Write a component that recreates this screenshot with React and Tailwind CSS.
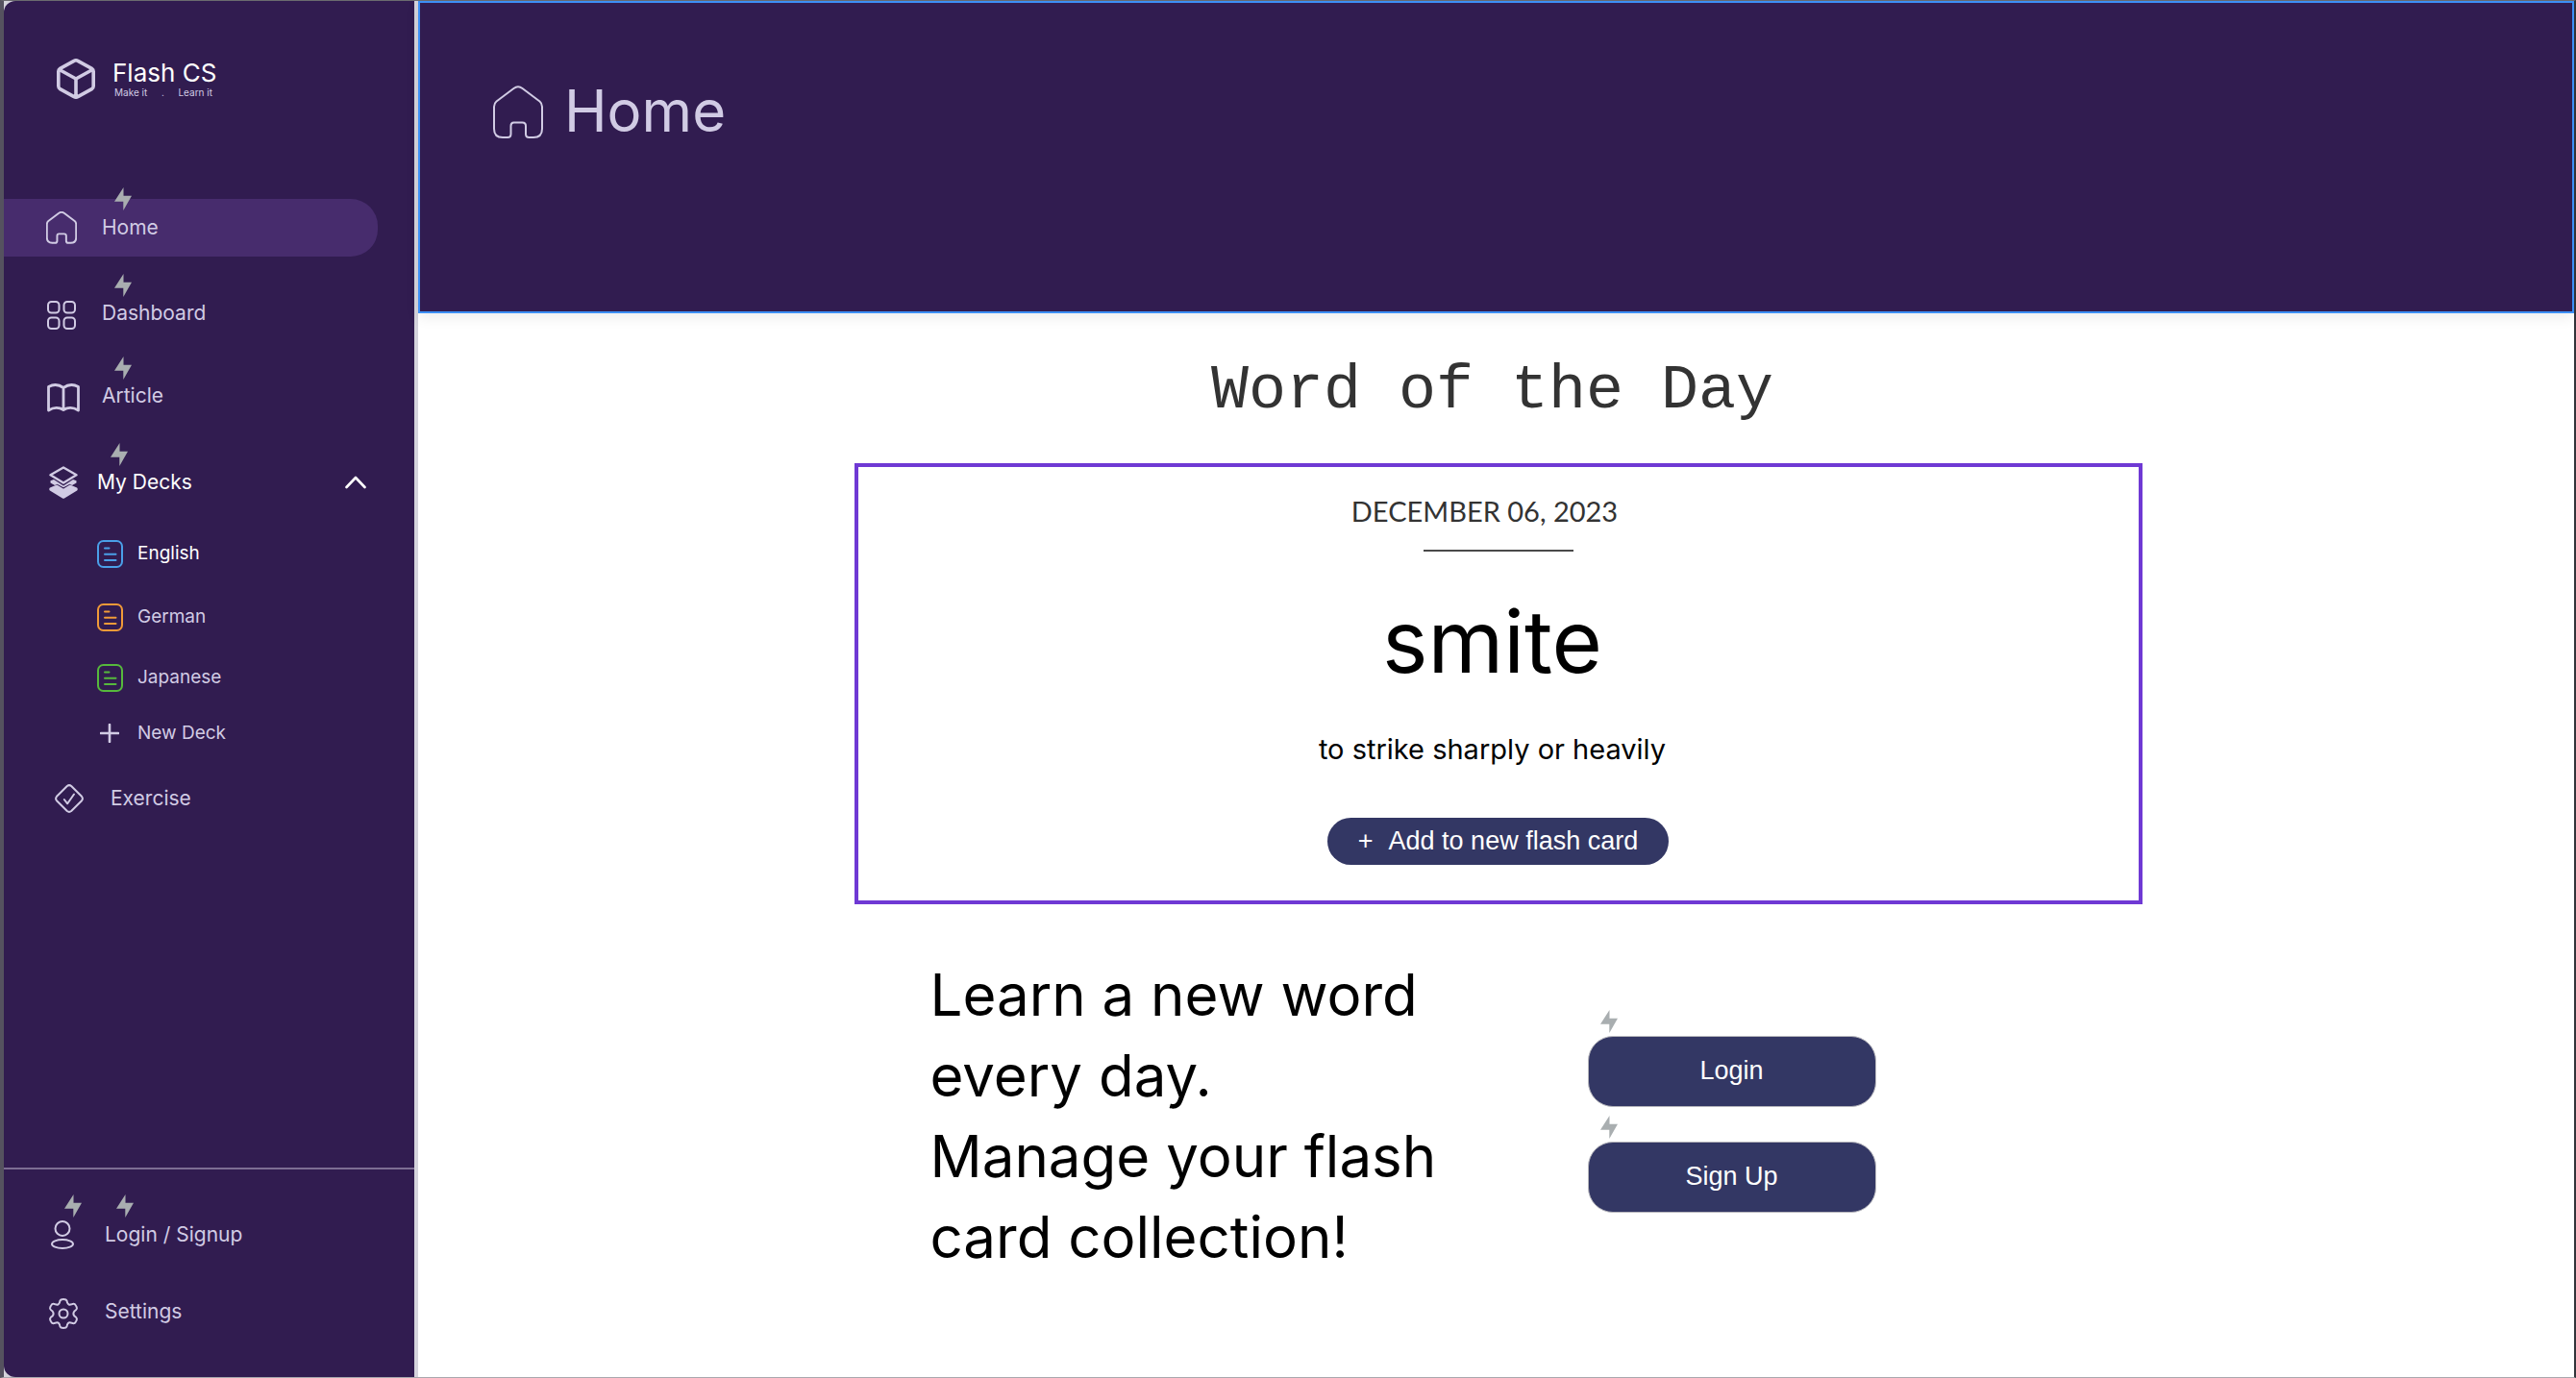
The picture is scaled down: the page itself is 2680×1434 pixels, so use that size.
const Bolt = ({ className = "" }) => (
  <svg viewBox="0 0 18 24" aria-hidden="true" className={`pointer-events-none absolute h-6 w-[18px] fill-[#a9aeb0] ${className}`}>
    <path d="M9.500 0 V8.800 H18 L9.300 24 V14.800 H0 Z" />
  </svg>
);

const HomeIcon = ({ className, stroke }) => (
  <svg viewBox="0 0 52 56" fill="none" stroke="currentColor" strokeWidth={stroke} strokeLinejoin="round" aria-hidden="true" className={className}>
    <path d="M21.500 3 Q26 -0.500 30.500 3 L48.500 16.500 Q51 18.500 51 22 V45 Q51 54 42 54 H37.500 Q34 54 34 50.500 V42 Q34 38.500 30.500 38.500 H21.500 Q18.500 38.500 18.500 42 V50.500 Q18.500 54 15 54 H10 Q1 54 1 45 V22 Q1 18.500 3.500 16.500 Z" />
  </svg>
);

const Stroke = ({ children, className, viewBox, width = 2 }) => (
  <svg viewBox={viewBox} fill="none" stroke="currentColor" strokeWidth={width} strokeLinecap="round" strokeLinejoin="round" aria-hidden="true" className={className}>
    {children}
  </svg>
);

const CubeIcon = () => (
  <Stroke viewBox="0 0 40 42" width={3.6} className="h-[42px] w-10">
    <path d="M18 2.300 Q20 1.300 22 2.300 L36.500 10.300 Q38.200 11.300 38.200 13.300 V28.500 Q38.200 30.700 36.500 31.700 L22 39.700 Q20 40.700 18 39.700 L3.500 31.700 Q1.800 30.700 1.800 28.500 V13.300 Q1.800 11.300 3.500 10.300 Z M2.800 11.500 L20 21 L37.200 11.500 M20 21 V40" />
  </Stroke>
);

const GridIcon = () => (
  <Stroke viewBox="0 0 30 30" className="size-[30px]">
    <rect x="1" y="1" width="11.500" height="11.500" rx="3.500" />
    <rect x="17.500" y="1" width="11.500" height="11.500" rx="3.500" />
    <rect x="1" y="17.500" width="11.500" height="11.500" rx="3.500" />
    <rect x="17.500" y="17.500" width="11.500" height="11.500" rx="3.500" />
  </Stroke>
);

const BookIcon = () => (
  <Stroke viewBox="0 0 34 30" width={2.800} className="h-[30px] w-[34px]">
    <path d="M17 4.500 Q9.500 -1 1.500 3.500 V28 Q9.500 23 17 27.500 Q24.500 23 32.500 28 V3.500 Q24.500 -1 17 4.500 Z M17 4.500 V27.500" />
  </Stroke>
);

const StackIcon = () => (
  <Stroke viewBox="0 0 30 34" width={2.400} className="h-[34px] w-[30px]">
    <path d="M15 1.500 L28.500 9.300 L15 17.500 L1.500 9.300 Z" />
    <path d="M1.500 15.300 L5 14 L15 20.500 L25 14 L28.500 15.300 V17.500 L24 20 L21.500 18.700 L15 22.300 L8.500 18.700 L6 20 L1.500 17.500 Z" fill="currentColor" stroke="none" />
    <path d="M1.500 23.700 L8 20.800 L15 25 L22 20.800 L28.500 23.700 V24.500 L15 32.600 L1.500 24.500 Z" fill="currentColor" />
  </Stroke>
);

const DeckIcon = ({ className }) => (
  <Stroke viewBox="0 0 27 29" className={`h-[29px] w-[27px] ${className}`}>
    <rect x="1" y="1" width="25" height="27" rx="5.500" />
    <path d="M8 8.500 H12.500 M8 14.700 H19.500 M8 21 H19.500" />
  </Stroke>
);

const DiamondIcon = () => (
  <Stroke viewBox="0 0 30 30" className="size-[30px]">
    <path d="M12.800 2 Q15 0.200 17.200 2 L28 12.800 Q29.800 15 28 17.200 L17.200 28 Q15 29.800 12.800 28 L2 17.200 Q0.200 15 2 12.800 Z" />
    <path d="M9.800 16 L13.200 20.300 L20 10.500" />
  </Stroke>
);

const UserIcon = () => (
  <Stroke viewBox="0 0 24 30" className="h-[30px] w-6">
    <circle cx="12" cy="8.500" r="7.500" />
    <ellipse cx="12" cy="24.500" rx="11" ry="4.500" />
  </Stroke>
);

const GearIcon = () => (
  <Stroke viewBox="0 0 30 32" className="h-8 w-[30px]">
    <path d="M12.500 1.500 Q15 0.700 17.500 1.500 Q18.800 2.200 19 4.500 Q20 7.500 23.500 6.300 Q26.500 5 27.500 7 Q29.300 9.300 28.800 11 Q28.300 12.300 26.500 13.300 Q24.300 16 26.500 18.700 Q28.300 19.700 28.800 21 Q29.300 22.700 27.500 25 Q26.500 27 23.500 25.700 Q20 24.500 19 27.500 Q18.800 29.800 17.500 30.500 Q15 31.300 12.500 30.500 Q11.200 29.800 11 27.500 Q10 24.500 6.500 25.700 Q3.500 27 2.500 25 Q0.700 22.700 1.200 21 Q1.700 19.700 3.500 18.700 Q5.700 16 3.500 13.300 Q1.700 12.300 1.200 11 Q0.700 9.300 2.500 7 Q3.500 5 6.500 6.300 Q10 7.500 11 4.500 Q11.200 2.200 12.500 1.500 Z" />
    <circle cx="15" cy="16" r="4.500" />
  </Stroke>
);

const NavLink = ({ icon, label, className = "", bolts }) => (
  <a href="#" className={`relative flex items-center text-[21px] leading-7 ${className}`}>
    <span className="flex w-[58px] shrink-0 items-center">{icon}</span>
    {label}
    {bolts}
  </a>
);

const DeckLink = ({ icon, label, className = "" }) => (
  <a href="#" className={`flex h-[30px] items-center text-[19px] leading-6 ${className}`}>
    <span className="flex w-[42px] shrink-0 items-center">{icon}</span>
    {label}
  </a>
);

const Sidebar = () => (
  <div className="shrink-0 border-r-4 border-[#d5d4dc] bg-[#d5d4dc]">
    <aside className="flex min-h-full w-[427px] flex-col rounded-l-xl bg-[#311c50] text-[#d1cbe4]">
      <div className="mt-[58px] flex h-[46px] items-center pl-[55px]">
        <CubeIcon />
        <div className="ml-[18px]">
          <div className="text-[26px] leading-7 text-white">Flash CS</div>
          <div className="flex w-[104px] justify-between pl-0.5 text-[10px] leading-3">
            <span>Make it</span>
            <span>.</span>
            <span>Learn it</span>
          </div>
        </div>
      </div>

      <nav aria-label="Main" className="mt-[102px] flex flex-col">
        <NavLink
          label="Home"
          icon={<HomeIcon stroke={3.200} className="h-[34px] w-8" />}
          className="mr-[38px] h-[60px] rounded-r-[28px] bg-[#472c6d] pl-11"
          bolts={<Bolt className="-top-3 left-[115px]" />}
        />
        <NavLink label="Dashboard" icon={<span className="pt-1 pl-px"><GridIcon /></span>} className="mt-[34px] h-[50px] pl-11" bolts={<Bolt className="-top-4 left-[115px]" />} />
        <NavLink label="Article" icon={<span className="pt-1 pl-px"><BookIcon /></span>} className="mt-9 h-[50px] pl-11" bolts={<Bolt className="-top-4 left-[115px]" />} />
        <button type="button" aria-expanded="true" className="relative mt-10 flex h-[50px] items-center pr-[50px] pl-[47px] text-[21px] leading-7 text-white">
          <span className="flex w-[50px] text-[#d1cbe4]"><StackIcon /></span>
          My Decks
          <Stroke viewBox="0 0 22 14" width={2.600} className="ml-auto h-3.5 w-[22px]">
            <path d="M1.500 12 L11 2 L20.500 12" />
          </Stroke>
          <Bolt className="-top-4 left-[111px]" />
        </button>
        <div className="mt-[34px] flex flex-col pl-[97px]">
          <DeckLink label="English" icon={<DeckIcon className="text-[#4a9fe8]" />} className="text-white" />
          <DeckLink label="German" icon={<DeckIcon className="text-[#f09a38]" />} className="mt-9" />
          <DeckLink label="Japanese" icon={<DeckIcon className="text-[#56b93c]" />} className="mt-[33px]" />
          <button type="button" className="mt-7 flex h-[30px] items-center text-[19px] leading-6">
            <span className="flex w-[42px] pl-[3px]">
              <Stroke viewBox="0 0 20 20" width={2.600} className="size-5"><path d="M10 1 V19 M1 10 H19" /></Stroke>
            </span>
            New Deck
          </button>
        </div>
        <NavLink label="Exercise" icon={<DiamondIcon />} className="mt-9 h-[34px] pl-[53px]" />
      </nav>

      <div className="mt-auto flex flex-col border-t-2 border-[#7d6d93] pt-[50px] pb-[50px]">
        <NavLink
          label="Login / Signup"
          icon={<span className="pl-0.5"><UserIcon /></span>}
          className="h-9 pl-[47px]"
          bolts={<><Bolt className="-top-6 left-[63px]" /><Bolt className="-top-6 left-[117px]" /></>}
        />
        <NavLink label="Settings" icon={<span className="pt-1"><GearIcon /></span>} className="mt-11 h-9 pl-[47px]" />
      </div>
    </aside>
  </div>
);

const ActionButton = ({ label }) => (
  <button type="button" className="relative h-[74px] w-[300px] rounded-[26px] border border-[#b5b5bb] bg-[#333764] pb-0.5 text-[27px] leading-8 text-white">
    {label}
    <Bolt className="-top-7 left-3" />
  </button>
);

export default function App() {
  return (
    <div className="flex min-h-screen border-t border-r-2 border-b border-l-4 border-t-[#6b6b6f] border-r-[#33343a] border-b-[#a9a7ae] border-l-[#55525f] bg-white font-['Inter','Liberation_Sans',sans-serif]">
      <Sidebar />
      <main className="flex flex-1 flex-col">
        <header className="flex h-[325px] items-start border-2 border-[#3d8ff5] bg-[#311c50] px-[76px] pt-[76px] text-[#d1cbe4] shadow-[0_4px_14px_rgba(0,0,0,0.08)]">
          <HomeIcon stroke={2} className="mt-2.5 h-14 w-[52px]" />
          <h1 className="ml-[22px] text-[60px] leading-[72px]">Home</h1>
        </header>

        <section className="flex flex-col items-center pr-8 pl-9">
          <h2 className="mt-[43px] pr-3 text-center font-['Liberation_Mono',monospace] text-[65px] leading-[76px] text-[#333]">Word of the Day</h2>
          <div className="mt-[37px] flex w-full max-w-[1340px] flex-col items-center border-4 border-[#6f39d4] pt-7 pb-[37px] text-black">
            <p className="pr-7 font-['Lato',sans-serif] text-[29px] leading-9 text-[#333]">DECEMBER 06, 2023</p>
            <hr className="mt-[22px] w-[156px] border-t-2 border-[#4a4a4a]" />
            <p className="mt-[38px] pr-3 text-[90px] leading-[112px]">smite</p>
            <p className="mt-9 pr-3 text-[29px] leading-10">to strike sharply or heavily</p>
            <button type="button" className="mt-[51px] flex h-[49px] items-center rounded-full bg-[#333764] px-8 pb-0.5 font-['Liberation_Sans',sans-serif] text-[27px] leading-8 text-white">
              <span className="mr-4">+</span>Add to new flash card
            </button>
          </div>
          <div className="mt-[52px] flex w-full max-w-[1182px] items-start text-black">
            <p className="w-[684px] shrink-0 text-[60px] leading-[84px]">Learn a new word<br />every day.<br />Manage your flash<br />card collection!</p>
            <div className="mt-[85px] flex flex-col gap-9 font-['Liberation_Sans',sans-serif]">
              <ActionButton label="Login" />
              <ActionButton label="Sign Up" />
            </div>
          </div>
        </section>
      </main>
    </div>
  );
}
